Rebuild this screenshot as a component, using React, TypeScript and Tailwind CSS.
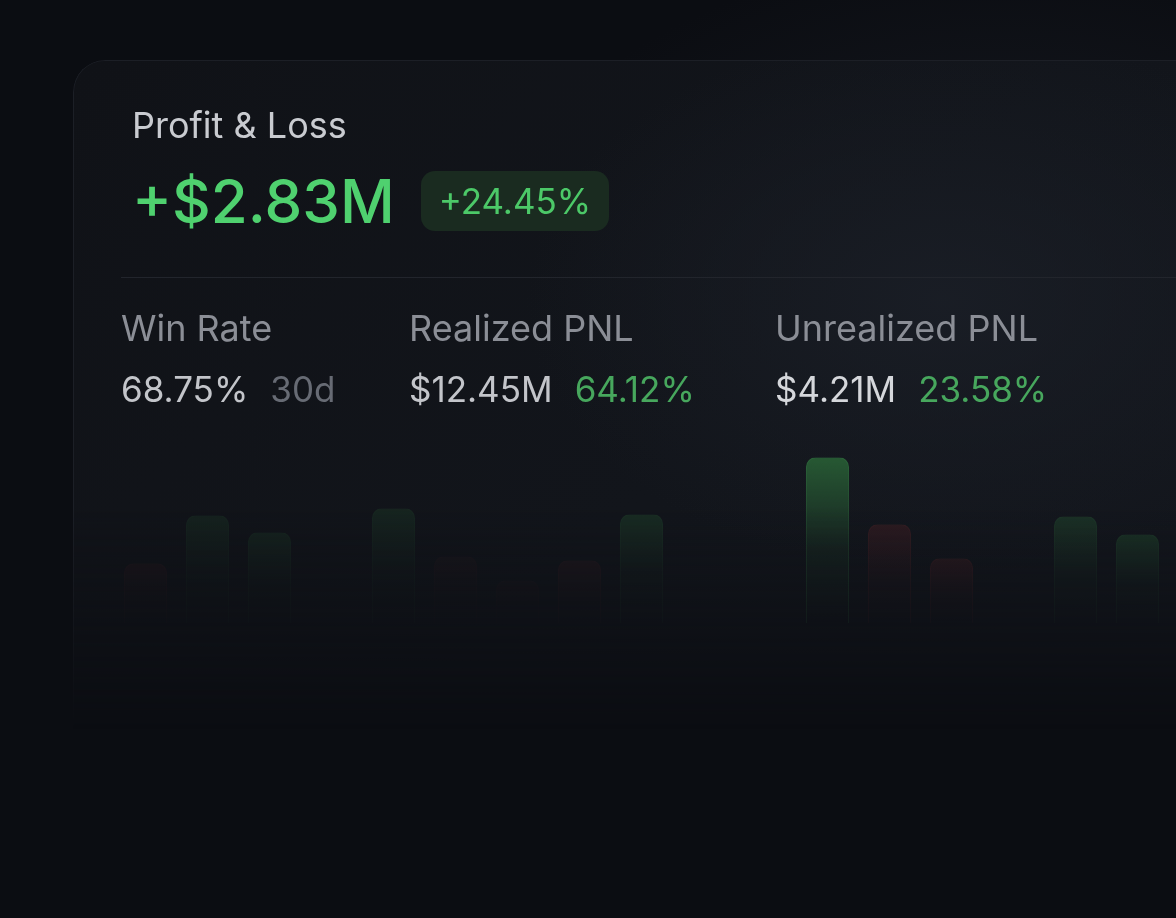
const bars: { h: number; tone: "g" | "r"; o: number }[] = [
  { h: 60, tone: "r", o: 0.25 },
  { h: 108, tone: "g", o: 0.22 },
  { h: 91, tone: "g", o: 0.22 },
  { h: 40, tone: "g", o: 0 },
  { h: 115, tone: "g", o: 0.25 },
  { h: 67, tone: "r", o: 0.18 },
  { h: 43, tone: "r", o: 0.14 },
  { h: 63, tone: "r", o: 0.3 },
  { h: 109, tone: "g", o: 0.35 },
  { h: 40, tone: "g", o: 0 },
  { h: 40, tone: "g", o: 0 },
  { h: 166, tone: "g", o: 1 },
  { h: 99, tone: "r", o: 0.7 },
  { h: 65, tone: "r", o: 0.6 },
  { h: 40, tone: "g", o: 0 },
  { h: 107, tone: "g", o: 0.42 },
  { h: 89, tone: "g", o: 0.42 },
];

function Stat({
  label,
  value,
  sub,
  valueClass,
  subClass,
}: {
  label: string;
  value: string;
  sub: string;
  valueClass: string;
  subClass: string;
}) {
  return (
    <div className="flex flex-col">
      <span className="text-[36px] leading-[43px] text-[#8b8e96]">{label}</span>
      <div className="mt-[19px] flex items-baseline gap-[22px] text-[35px] leading-[40px]">
        <span className={valueClass}>{value}</span>
        <span className={subClass}>{sub}</span>
      </div>
    </div>
  );
}

export default function App() {
  return (
    <div className="h-[918px] w-full overflow-hidden bg-[#0b0d12] bg-[radial-gradient(ellipse_55%_40%_at_85%_25%,rgba(30,34,43,0.55),transparent_75%)] pt-[60px] font-['Inter',sans-serif]">
      <div className="ml-[73px] h-[858px] w-[1160px] rounded-tl-[32px] border-l border-t border-[#1c1f26] bg-[radial-gradient(ellipse_45%_40%_at_75%_28%,rgba(26,30,38,0.9),transparent_80%),linear-gradient(135deg,#101217_0%,#12151b_50%,#14171e_100%)] pl-[47px] pt-[43px] [mask-image:linear-gradient(to_bottom,black_0%,black_52%,transparent_78%)]">
        <div className="pl-[11px]">
          <div className="text-[36px] leading-[43px] text-[#c9cbd0]">Profit &amp; Loss</div>
          <div className="mt-[24px] flex items-center gap-[26px]">
            <span className="text-[60px] font-medium leading-[60px] text-[#4fd16f]">+$2.83M</span>
            <span className="flex h-[60px] items-center rounded-[14px] bg-[#1a2b20] px-[18px] text-[35px] text-[#4cc968]">
              +24.45%
            </span>
          </div>
        </div>

        <div className="mt-[46px] h-px bg-[#22252c]" />

        <div className="mt-[29px] grid grid-cols-[288px_366px_auto]">
          <Stat
            label="Win Rate"
            value="68.75%"
            sub="30d"
            valueClass="text-[#c3c5ca]"
            subClass="text-[#676b74]"
          />
          <Stat
            label="Realized PNL"
            value="$12.45M"
            sub="64.12%"
            valueClass="text-[#c3c5ca]"
            subClass="text-[#47a75d]"
          />
          <Stat
            label="Unrealized PNL"
            value="$4.21M"
            sub="23.58%"
            valueClass="text-[#d5d7db]"
            subClass="text-[#47a75d]"
          />
        </div>

        <div className="mt-[34px] flex h-[180px] items-end gap-[19px] pl-[3px]">
          {bars.map((b, i) => (
            <div
              key={i}
              className={
                b.tone === "g"
                  ? "w-[43px] shrink-0 rounded-t-[10px] border-x border-t border-[rgba(70,160,90,0.16)] bg-[linear-gradient(to_bottom,rgba(50,128,64,0.62),rgba(48,120,62,0.14)_55%,transparent)]"
                  : "w-[43px] shrink-0 rounded-t-[10px] border-x border-t border-[rgba(160,60,60,0.12)] bg-[linear-gradient(to_bottom,rgba(120,40,45,0.36),rgba(120,40,45,0.1)_55%,transparent)]"
              }
              style={{ height: b.h, opacity: b.o }}
            />
          ))}
        </div>
      </div>
    </div>
  );
}
